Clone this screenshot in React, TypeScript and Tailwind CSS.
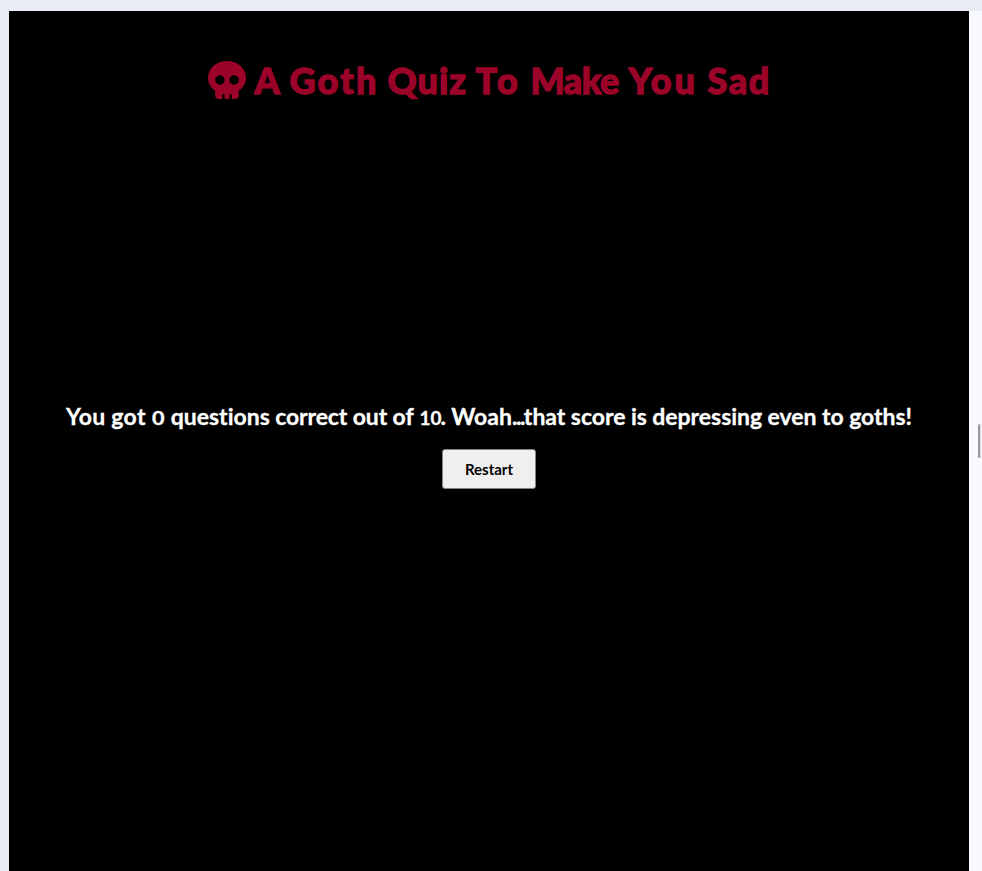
import { FaSkull } from "react-icons/fa6";

const titleWords = [
  { text: "A", style: "w-[35px]" },
  { text: "Goth", style: "w-[98px] tracking-[2.2px]" },
  { text: "Quiz", style: "w-[88px] tracking-[1px]" },
  { text: "To", style: "w-[55px] tracking-[4px]" },
  { text: "Make", style: "w-[98px] tracking-[-0.5px]" },
  { text: "You", style: "w-[79px] tracking-[2.8px]" },
  { text: "Sad", style: "w-[62px] tracking-[1.6px]" },
];

export default function App() {
  return (
    <div className="flex h-[871px] w-[982px] flex-col overflow-hidden bg-[#e9eef6] font-['Lato','Noto_Sans',sans-serif]">
      <div className="h-[11px] shrink-0" />
      <div className="flex min-h-0 flex-1">
        <div className="w-[9px] shrink-0" />
        <main className="flex w-[960px] shrink-0 flex-col items-center bg-black">
          <h1 className="mt-[45px] flex h-12 items-center whitespace-nowrap pr-px text-[36px] font-black leading-[48px] text-[#9b0329] [-webkit-text-stroke:1.3px_#9b0329]">
            <FaSkull className="mr-[9px] size-[38px] [stroke-width:0]" />
            {titleWords.map((word) => (
              <span key={word.text} className={word.style}>
                {word.text}{" "}
              </span>
            ))}
          </h1>
          <p className="mt-[296px] h-8 whitespace-nowrap text-[23px] font-bold leading-8 text-white [-webkit-text-stroke:0.3px_#fff] [font-variant-ligatures:none]">
            <span className="tracking-[0.3px]">You got </span>
            <span className="mx-[1.5px] inline-block scale-x-120 text-[18px] leading-none">0</span> questions
            <span className="tracking-[-0.12px]"> correct out of </span>
            <span className="ml-px inline-block scale-x-105 text-[18px] leading-none">10</span>. Woah
            <span className="tracking-[-1.5px]">...</span>
            <span className="tracking-[-0.04px]">that score is depressing even to goths!</span>
          </p>
          <button className="mt-[17px] h-10 w-[94px] rounded-[3px] border border-[#858585] bg-[#efefef] text-[15px] font-bold text-black">
            Restart
          </button>
        </main>
        <aside className="flex flex-1 justify-end bg-[#f9faff] pt-[413px] pr-[1px]">
          <div className="h-[34px] w-[3px] rounded-full border-r border-[#dddddd] bg-[#999999]" />
        </aside>
      </div>
    </div>
  );
}
